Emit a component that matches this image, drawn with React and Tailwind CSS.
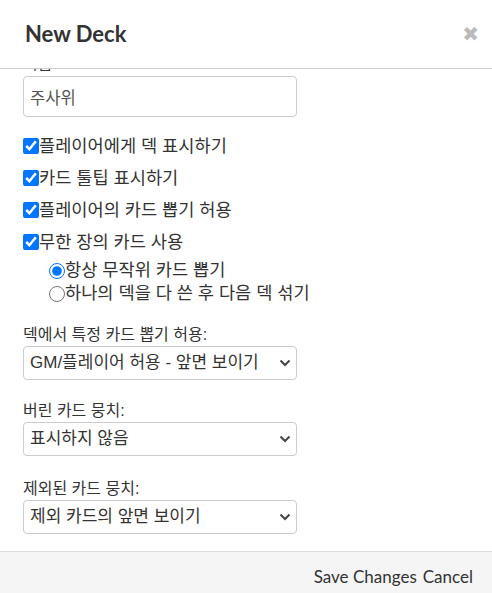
import React from 'react';

const kr = { fontFamily: '"Liberation Sans", "Noto Sans CJK KR", sans-serif' };

const Chevron = () => (
    <svg width="12" height="8" viewBox="0 0 12 8" className="absolute right-[6px] top-1/2 -translate-y-1/2 pointer-events-none">
        <path d="M1.5 1.5 L6 6 L10.5 1.5" fill="none" stroke="#444" strokeWidth="2" />
    </svg>
);

const Select = ({ value }) => (
    <div className="relative w-[274px]">
        <select
            defaultValue={value}
            className="appearance-none w-full h-[34px] border border-[#ccc] rounded-[4px] bg-white pl-[6px] pr-8 text-[17px] text-[#333] outline-none"
            style={kr}
        >
            <option>{value}</option>
        </select>
        <Chevron />
    </div>
);

const Field = ({ label, value, className }) => (
    <div className={className}>
        <div className="text-[16px] text-[#333] h-[22px] leading-[22px]">{label}</div>
        <Select value={value} />
    </div>
);

const Check = ({ label }) => (
    <label className="flex items-center h-[32px] text-[17.6px] text-[#333]">
        <input type="checkbox" defaultChecked className="w-[16px] h-[16px]" />
        <span>{label}</span>
    </label>
);

const Radio = ({ label, checked }) => (
    <label className="flex items-center h-[23px] text-[17.6px] text-[#333]">
        <input type="radio" name="mode" defaultChecked={checked} className="w-[16px] h-[16px]" />
        <span>{label}</span>
    </label>
);

export default function App() {
    return (
        <div className="w-[492px] h-[593px] bg-white flex flex-col overflow-hidden" style={kr}>
            <div className="h-[69px] shrink-0 flex items-center justify-between px-[25px] border-b border-[#cfcfcf]">
                <h2 className="text-[22px] font-bold text-[#333] -mt-[2px]" style={{ fontFamily: 'Lato, sans-serif' }}>New Deck</h2>
                <span className="text-[#bbb] text-[20px] font-bold leading-none -mr-[12px]" style={{ fontFamily: '"DejaVu Sans", sans-serif' }}>✖</span>
            </div>

            <div className="flex-1 overflow-hidden px-[23px]">
                <div className="-mt-[17px]">
                    <div className="text-[16px] text-[#333] h-[24px] leading-[24px]">이름</div>
                    <input
                        type="text"
                        defaultValue="주사위"
                        className="w-[274px] h-[41px] border border-[#ccc] rounded-[4px] px-[6px] text-[16.6px] text-[#555] outline-none"
                        style={kr}
                    />

                    <div className="mt-[13px]">
                        <Check label="플레이어에게 덱 표시하기" />
                        <Check label="카드 툴팁 표시하기" />
                        <Check label="플레이어의 카드 뽑기 허용" />
                        <Check label="무한 장의 카드 사용" />
                        <div className="pl-[26px] mt-[1px]">
                            <Radio label="항상 무작위 카드 뽑기" checked />
                            <Radio label="하나의 덱을 다 쓴 후 다음 덱 섞기" />
                        </div>
                    </div>

                    <Field className="mt-[19px]" label="덱에서 특정 카드 뽑기 허용:" value="GM/플레이어 허용 - 앞면 보이기" />
                    <Field className="mt-[20px]" label="버린 카드 뭉치:" value="표시하지 않음" />
                    <Field className="mt-[22px]" label="제외된 카드 뭉치:" value="제외 카드의 앞면 보이기" />
                </div>
            </div>

            <div className="h-[42px] shrink-0 bg-[#f5f5f5] border-t border-[#dcdcdc] flex items-center justify-end gap-[6px] pr-[19px] pt-[9px] text-[17px] text-[#333]" style={{ fontFamily: 'Lato, sans-serif' }}>
                <button>Save Changes</button>
                <button>Cancel</button>
            </div>
        </div>
    );
}
